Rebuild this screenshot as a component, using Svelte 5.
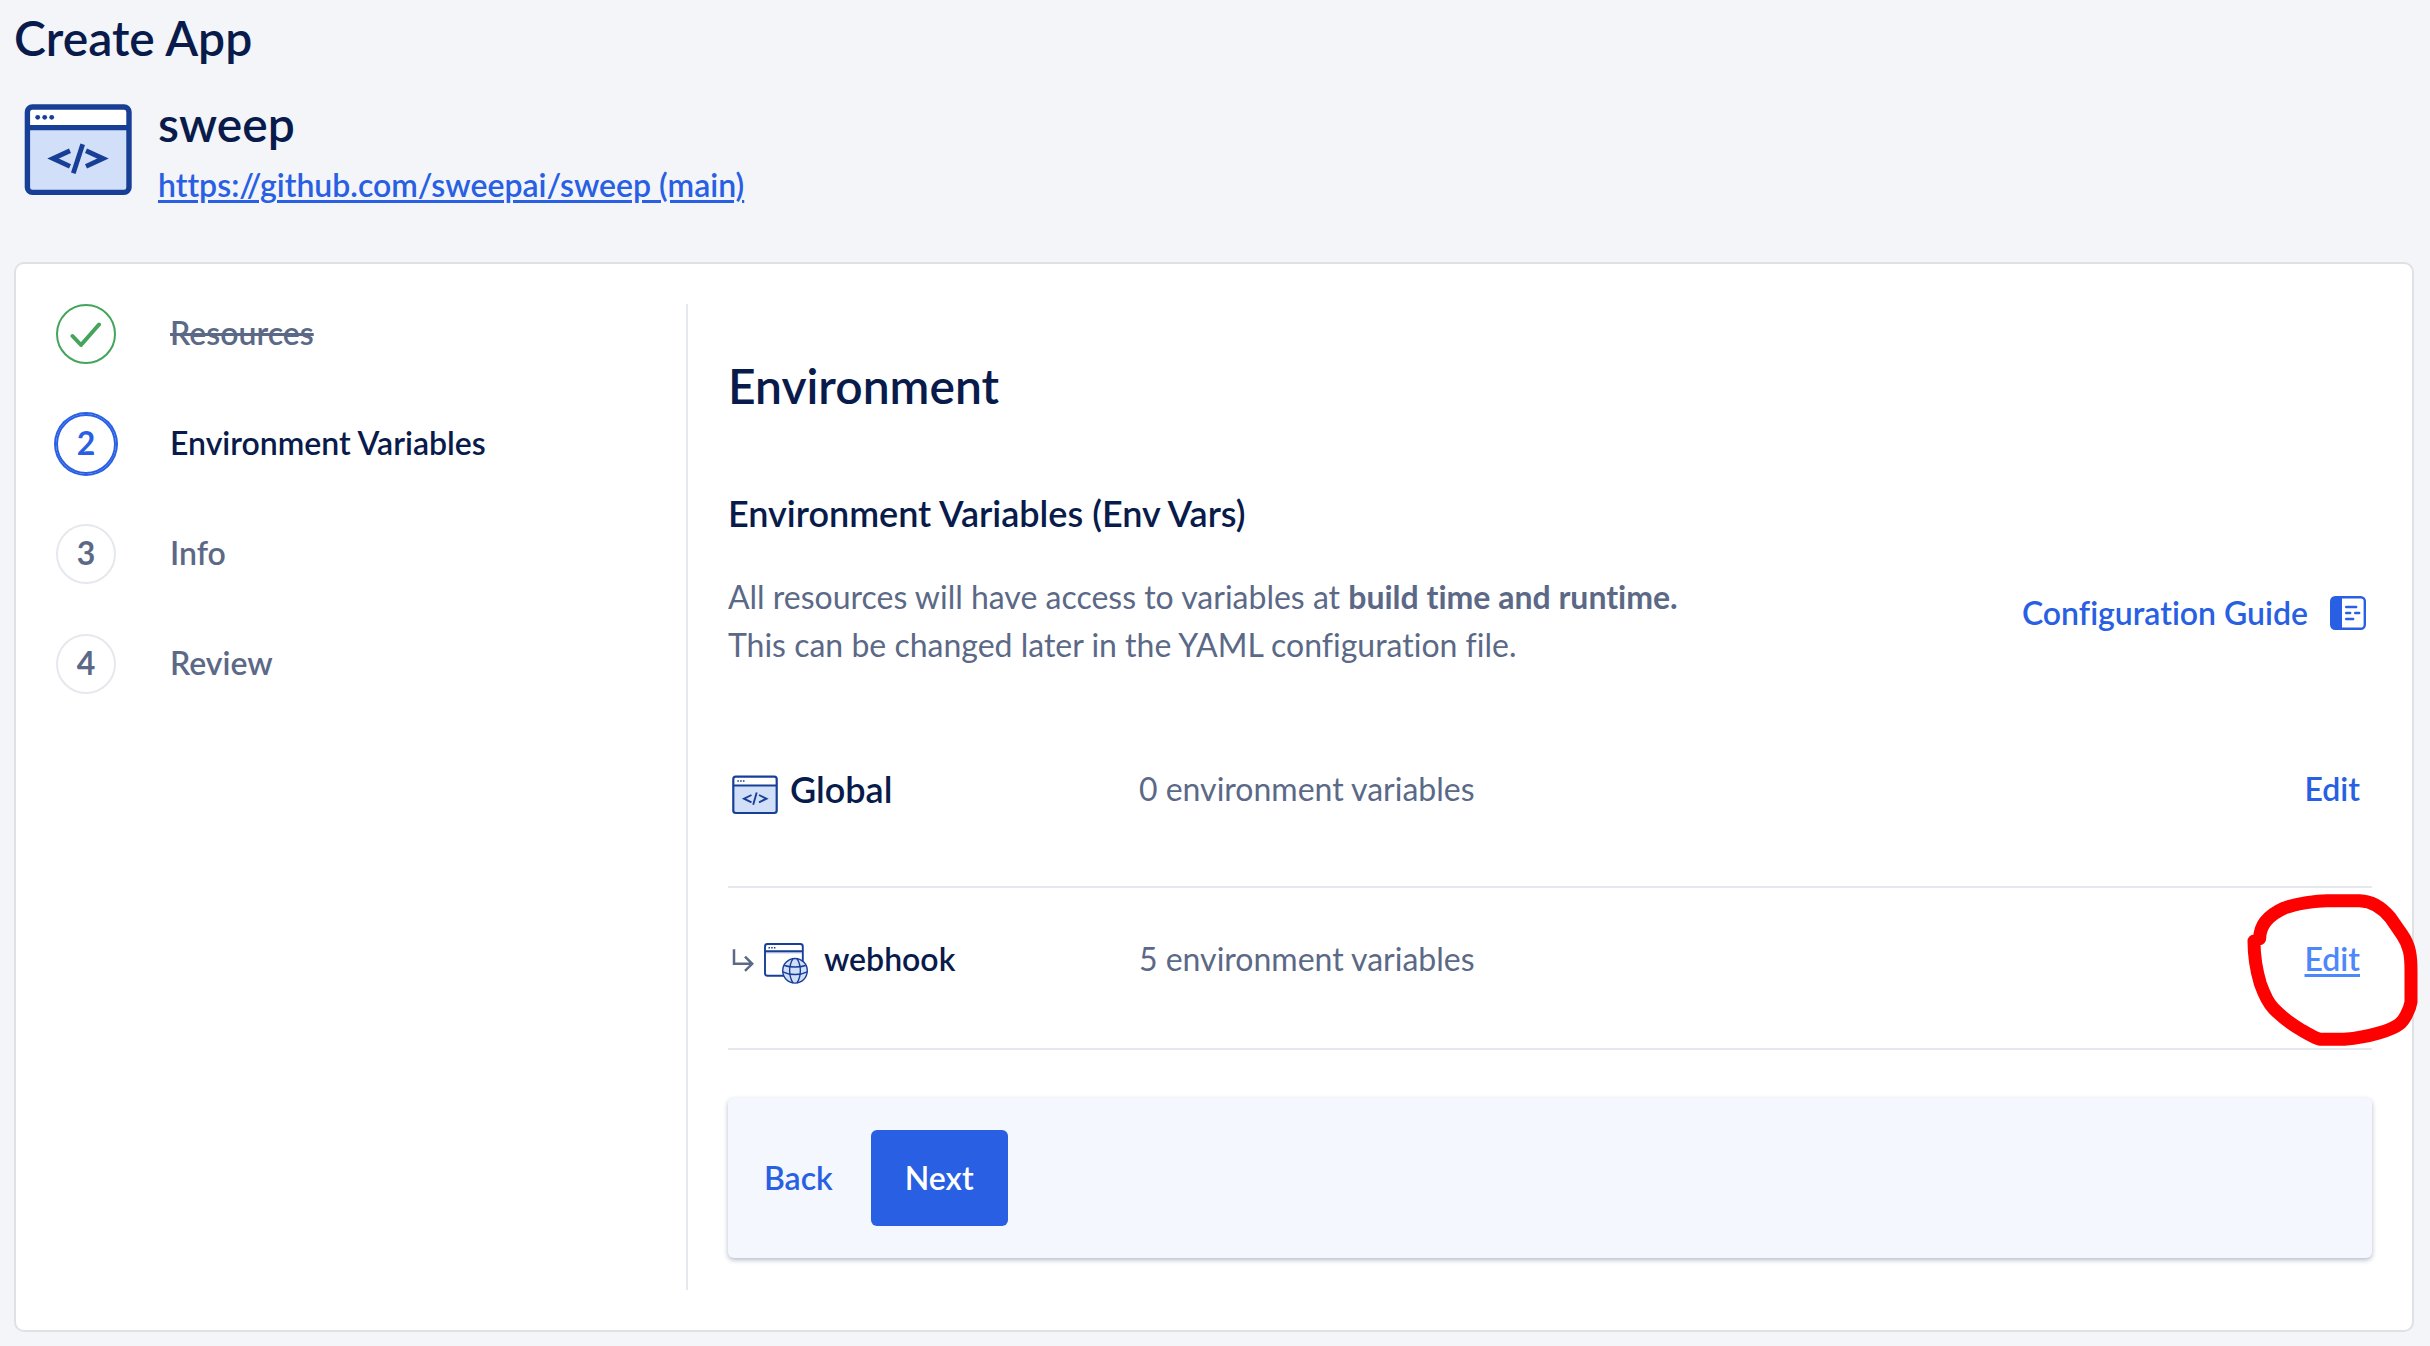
<script>
  const steps = [
    { number: 1, label: 'Resources', state: 'done' },
    { number: 2, label: 'Environment Variables', state: 'current' },
    { number: 3, label: 'Info', state: 'todo' },
    { number: 4, label: 'Review', state: 'todo' }
  ];
</script>

<main class="page">
  <h1>Create App</h1>

  <header class="app">
    <svg class="app-icon" viewBox="0 0 128 118" aria-hidden="true">
      <rect x="13.4" y="17" width="101.6" height="85.4" rx="5" fill="#d2dff9" />
      <path d="M13.4 37.6V21a4 4 0 0 1 4-4h93.6a4 4 0 0 1 4 4v16.6z" fill="#fff" />
      <rect x="13.4" y="17" width="101.6" height="85.4" rx="5" fill="none" stroke="#173f96" stroke-width="5.4" />
      <path d="M13.4 37.6H115" stroke="#173f96" stroke-width="5.2" />
      <g fill="#173f96">
        <circle cx="23.7" cy="27.3" r="2.4" />
        <circle cx="30.7" cy="27.3" r="2.4" />
        <circle cx="37.7" cy="27.3" r="2.4" />
      </g>
      <g fill="none" stroke="#173f96" stroke-width="4.8">
        <path d="M56 60.8 39 68.5 56 76.4" />
        <path d="M72 60.8 89 68.5 72 76.4" />
        <path d="M68.7 54.3 59.3 83.2" />
      </g>
    </svg>
    <div class="app-text">
      <h2>sweep</h2>
      <a class="repo" href="https://github.com/sweepai/sweep">https://github.com/sweepai/sweep (main)</a>
    </div>
  </header>

  <div class="card">
    <ol class="steps">
      {#each steps as step}
        <li class={step.state}>
          <span class="badge">
            {#if step.state === 'done'}
              <svg viewBox="0 0 32 32" aria-label="Done"><path d="M2.5 18 11 27 29 6.5" /></svg>
            {:else}
              {step.number}
            {/if}
          </span>
          <span class="step-label">{step.label}</span>
        </li>
      {/each}
    </ol>

    <section class="content">
      <h2>Environment</h2>
      <h3>Environment Variables (Env Vars)</h3>

      <div class="intro">
        <p>
          All resources will have access to variables at <strong>build time and runtime.</strong><br />
          This can be changed later in the YAML configuration file.
        </p>
        <a class="guide" href="#guide">
          Configuration Guide
          <svg viewBox="0 0 36 34" aria-hidden="true">
            <rect x="1.2" y="1.2" width="33.6" height="31.6" rx="4" fill="none" stroke="currentColor" stroke-width="2.4" />
            <path d="M4 1h8v32H4a3 3 0 0 1-3-3V4a3 3 0 0 1 3-3z" fill="currentColor" />
            <path d="M16.2 11h10M16.2 17h4M25.2 17h4M16.2 23h7" stroke="currentColor" stroke-width="2.4" stroke-linecap="round" />
          </svg>
        </a>
      </div>

      <ul class="resources">
        <li class="global">
          <div class="name">
            <svg class="window" viewBox="0 1 48 48" aria-hidden="true">
              <rect x="5.3" y="12.7" width="43.4" height="36.3" rx="2.5" fill="#d2dff9" />
              <path d="M5.3 21.3v-7a2 2 0 0 1 2-1.6h39.4a2 2 0 0 1 2 1.6v7z" fill="#fff" />
              <g fill="none" stroke="#173f96">
                <rect x="5.3" y="12.7" width="43.4" height="36.3" rx="2.5" stroke-width="2.2" />
                <path d="M5.3 21.5h43.4" stroke-width="2" />
                <path d="M23.500 31 16 34.7l7.5 3.7M31 31l7.5 3.7-7.5 3.7M28.7 28.5 25.2 40.7" stroke-width="1.9" />
                <path d="M9.300 17h8" stroke-width="1.5" stroke-dasharray="1.6 1.2" />
              </g>
            </svg>
            <h3>Global</h3>
          </div>
          <span>0 environment variables</span>
          <a class="edit" href="#global">Edit</a>
        </li>
        <li>
          <div class="name">
            <svg class="child" viewBox="0 1 84 48" aria-hidden="true">
              <path d="M6 15.3v14.5h18M17 22.7l7.2 7.1-7.2 7.1" fill="none" stroke="#5b6987" stroke-width="2.5" />
              <g fill="none" stroke="#173f96" stroke-width="1.9">
                <rect x="37" y="10" width="37.800" height="31.8" rx="2.5" fill="#fff" />
                <path d="M37 17.3h37.8" />
                <path d="M40.5 13.7h7" stroke-width="1.5" stroke-dasharray="1.5 1.2" />
              </g>
              <path d="M38 18.8h36" stroke="#93a9d6" stroke-width="1" />
              <g fill="none" stroke="#173f96" stroke-width="1.4">
                <circle cx="67" cy="36.8" r="12.3" fill="#d2dff9" />
                <path d="M65 24.600c-4.500 7-4.500 17.400 0 24.400M69 24.600c4.500 7 4.500 17.400 0 24.400" />
                <path d="M56.3 31.500c6 2 15.400 2 21.400 0M54.800 37.800c7 3.600 17.400 3.600 24.400 0" />
              </g>
            </svg>
            <h4>webhook</h4>
          </div>
          <span>5 environment variables</span>
          <div class="marked">
            <a class="edit hovered" href="#webhook">Edit</a>
            <svg class="scribble" viewBox="140 98 513 462" aria-hidden="true">
              <path d="M178 235C178 195 205 164 252 143C290 129 350 121 380 121H478C515 122 548 145 570 172L606 224C628 256 632 285 632 330V425C628 450 610 482 596 492C575 508 510 530 432 537H362C350 537 325 522 303 509C270 490 235 460 220 445C205 430 190 398 180 370C168 330 161 285 161 242" />
            </svg>
          </div>
        </li>
      </ul>

      <footer>
        <button class="back" type="button">Back</button>
        <button class="next" type="button">Next</button>
      </footer>
    </section>
  </div>
</main>

<style>
  :global(body) {
    background: #f3f5f9;
  }
  .page {
    box-sizing: border-box;
    padding: 6px 16px 14px 14px;
    font: 400 32px/48px Lato, "Liberation Sans", sans-serif;
    font-variant-ligatures: none;
    color: #5b6987;
  }
  h1, h2, h3, h4, p, ol, ul {
    margin: 0;
    padding: 0;
  }
  h1, h2, h3, h4 {
    font-weight: 600;
    color: #081b4b;
  }
  h1, h2 {
    font-size: 48px;
    line-height: 64px;
  }
  h3 {
    font-size: 36px;
  }
  h4 {
    font-size: 32px;
  }
  a, button {
    font-weight: 600;
    color: #285fe3;
    text-decoration: none;
  }
  .app {
    display: flex;
    gap: 16px;
    margin: 20px 0 53px;
  }
  .app-icon {
    width: 128px;
    height: 118px;
  }
  .app-text {
    padding-top: 2px;
  }
  .repo {
    display: block;
    margin-top: 5px;
    text-decoration: underline;
    text-decoration-thickness: 3px;
    text-underline-offset: 3px;
  }
  .card {
    display: grid;
    grid-template-columns: minmax(0, 27.2%) minmax(0, 1fr);
    padding: 40px;
    border: 2px solid #dfe1e4;
    border-radius: 10px;
    background: #fff;
  }
  .steps {
    display: flex;
    flex-direction: column;
    gap: 50px;
    list-style: none;
    font-weight: 600;
  }
  .steps li {
    display: flex;
    gap: 54px;
    height: 60px;
    line-height: 58px;
  }
  .badge {
    box-sizing: border-box;
    flex: none;
    width: 60px;
    height: 60px;
    border: 2px solid #e5e8ed;
    border-radius: 50%;
    font-weight: 700;
    line-height: 54px;
    text-align: center;
  }
  .done .badge {
    display: grid;
    place-items: center;
    border-color: #43a45a;
  }
  .done svg {
    width: 32px;
    height: 32px;
    fill: none;
    stroke: #43a45a;
    stroke-width: 4;
    stroke-linecap: round;
    stroke-linejoin: round;
  }
  .done .step-label {
    text-decoration: line-through;
    text-decoration-thickness: 3px;
  }
  .current {
    color: #081b4b;
  }
  .current .badge {
    border-color: #285fe3;
    box-shadow: 0 0 0 2px #285fe3;
    color: #285fe3;
  }
  .content {
    padding: 50px 0 32px 40px;
    border-left: 2px solid #e5e8ed;
  }
  .content > h3 {
    margin: 71px 0 36px;
  }
  .intro {
    display: flex;
    justify-content: space-between;
    align-items: center;
    gap: 32px;
  }
  .intro strong {
    font-weight: 700;
  }
  .guide {
    display: flex;
    align-items: center;
    gap: 22px;
    padding: 0 6px 16px 0;
    white-space: nowrap;
  }
  .guide svg {
    width: 36px;
    height: 34px;
  }
  .resources {
    margin: 48px 0;
    list-style: none;
  }
  .resources li {
    display: grid;
    grid-template-columns: minmax(0, 1fr) minmax(0, 2fr) minmax(0, 1fr);
    padding: 47px 0 65px;
    border-bottom: 2px solid #e5e8ed;
  }
  .resources .global {
    padding: 48px 0 73px;
  }
  .name {
    display: flex;
    gap: 12px;
  }
  .global .name {
    gap: 14px;
  }
  .name svg {
    height: 48px;
    overflow: visible;
  }
  .window {
    width: 48px;
  }
  .child {
    width: 84px;
  }
  .edit {
    justify-self: end;
    margin-right: 12px;
  }
  .marked {
    position: relative;
    justify-self: end;
  }
  .hovered {
    color: #4d87fa;
    text-decoration: underline;
    text-decoration-thickness: 3px;
    text-underline-offset: 3px;
  }
  .scribble {
    position: absolute;
    top: -42px;
    right: -46px;
    width: 171px;
    height: 154px;
    fill: none;
    stroke: #f00;
    stroke-width: 39;
    stroke-linecap: round;
    stroke-linejoin: round;
    pointer-events: none;
  }
  footer {
    display: flex;
    gap: 2px;
    padding: 32px 0;
    border-radius: 6px;
    background: #f4f7fe;
    box-shadow: 0 2px 5px rgba(3, 27, 78, 0.3);
  }
  button {
    height: 96px;
    padding: 0 36px;
    border: 0;
    border-radius: 6px;
    background: none;
    font: inherit;
    font-weight: 600;
    cursor: pointer;
  }
  .next {
    padding: 0 34px;
    background: #285fe3;
    color: #fff;
  }
</style>
